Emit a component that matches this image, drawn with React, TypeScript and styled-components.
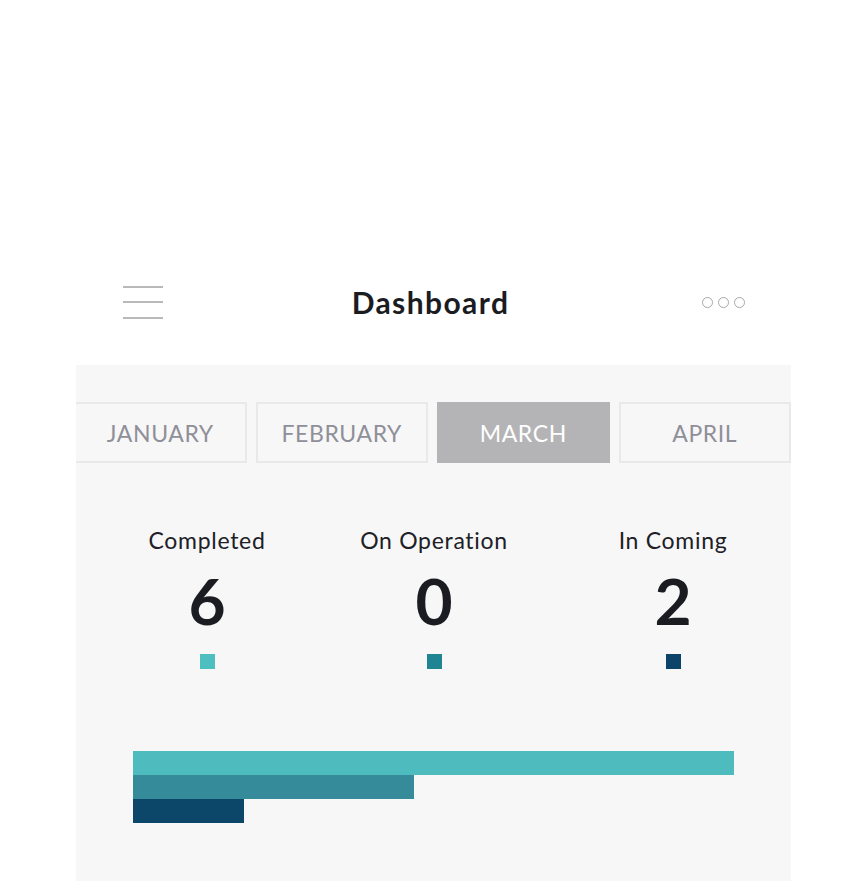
import React from "react";
import styled, { createGlobalStyle } from "styled-components";

const GlobalStyle = createGlobalStyle`
  body {
    margin: 0;
    background: #ffffff;
    font-family: "Lato", "Liberation Sans", sans-serif;
  }
`;

const months = ["JANUARY", "FEBRUARY", "MARCH", "APRIL"];

const stats = [
  { label: "Completed", value: 6, color: "#4dbfc0", bar: "#4ebcbf", width: 601 },
  { label: "On Operation", value: 0, color: "#208592", bar: "#368b9b", width: 281 },
  { label: "In Coming", value: 2, color: "#0b4468", bar: "#0c4769", width: 111 },
];

const Page = styled.div`
  width: 865px;
  height: 881px;
  padding-top: 270px;
  box-sizing: border-box;
  overflow: hidden;
`;

const Header = styled.div`
  display: flex;
  align-items: center;
  justify-content: space-between;
  height: 64px;
  padding: 0 119px 0 123px;
  margin-bottom: 31px;
`;

const Burger = styled.div`
  display: flex;
  flex-direction: column;
  gap: 13.5px;
  width: 40px;
`;

const BurgerLine = styled.span`
  display: block;
  height: 2px;
  background: #b9b9bc;
`;

const Title = styled.h1`
  margin: 0 4px 0 0;
  font-size: 30px;
  font-weight: 700;
  color: #1b1b22;
  letter-spacing: 1.4px;
`;

const Dots = styled.div`
  display: flex;
  gap: 5px;
  margin-right: 1px;
`;

const Dot = styled.span`
  width: 11px;
  height: 11px;
  box-sizing: border-box;
  border: 1.8px solid #a7a7ac;
  border-radius: 50%;
`;

const Panel = styled.div`
  margin-left: 76px;
  width: 715px;
  height: 516px;
  background: #f7f7f7;
  padding-top: 37px;
  box-sizing: border-box;
`;

const Tabs = styled.div`
  display: flex;
  gap: 9px;
`;

const Tab = styled.div<{ $active?: boolean }>`
  flex: 1;
  height: 61px;
  display: flex;
  align-items: center;
  justify-content: center;
  box-sizing: border-box;
  border: 2px solid ${(p) => (p.$active ? "#b4b4b6" : "#e9e9e9")};
  background: ${(p) => (p.$active ? "#b4b4b6" : "#f7f7f7")};
  color: ${(p) => (p.$active ? "#ffffff" : "#8f8f99")};
  font-size: 23px;
  letter-spacing: 0.6px;
  &:first-child {
    border-left: none;
  }
`;

const Stats = styled.div`
  display: grid;
  grid-template-columns: 190px 190px 214px;
  column-gap: 37px;
  padding: 62px 0 0 36px;
`;

const Stat = styled.div`
  display: flex;
  flex-direction: column;
  align-items: center;
`;

const Label = styled.div`
  font-size: 23px;
  letter-spacing: 0.7px;
  color: #202026;
  line-height: 30px;
`;

const Value = styled.div`
  font-size: 64px;
  font-weight: 700;
  color: #1b1b22;
  line-height: 64px;
  margin-top: 14px;
`;

const Swatch = styled.span<{ $color: string }>`
  width: 15px;
  height: 15px;
  margin-top: 21px;
  background: ${(p) => p.$color};
`;

const Chart = styled.div`
  display: flex;
  flex-direction: column;
  padding: 82px 0 0 57px;
`;

const Bar = styled.div<{ $color: string }>`
  height: 24px;
  background: ${(p) => p.$color};
`;

export default function App() {
  return (
    <Page>
      <GlobalStyle />
      <Header>
        <Burger>
          <BurgerLine />
          <BurgerLine />
          <BurgerLine />
        </Burger>
        <Title>Dashboard</Title>
        <Dots>
          <Dot />
          <Dot />
          <Dot />
        </Dots>
      </Header>
      <Panel>
        <Tabs>
          {months.map((m) => (
            <Tab key={m} $active={m === "MARCH"}>
              {m}
            </Tab>
          ))}
        </Tabs>
        <Stats>
          {stats.map((s) => (
            <Stat key={s.label}>
              <Label>{s.label}</Label>
              <Value>{s.value}</Value>
              <Swatch $color={s.color} />
            </Stat>
          ))}
        </Stats>
        <Chart>
          {stats.map((s) => (
            <Bar key={s.label} $color={s.bar} style={{ width: s.width }} />
          ))}
        </Chart>
      </Panel>
    </Page>
  );
}
